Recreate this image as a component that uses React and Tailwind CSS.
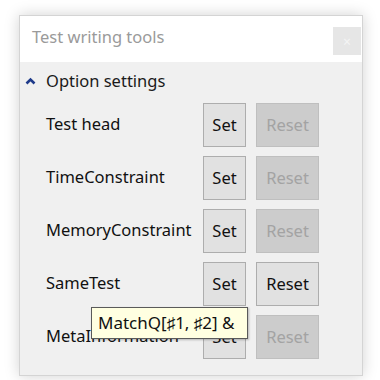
import React from "react";

const rows = [
  { label: "Test head", reset: false },
  { label: "TimeConstraint", reset: false },
  { label: "MemoryConstraint", reset: false },
  { label: "SameTest", reset: true },
  { label: "MetaInformation", reset: false },
];

export default function App() {
  return (
    <div className="w-[380px] h-[380px] bg-white overflow-hidden pt-[15px] pl-[19px]" style={{ fontFamily: '"Noto Sans", "Open Sans", sans-serif' }}>
      <div className="relative w-[344px] h-[361px] flex flex-col bg-[#f0f0f0] border border-[#d4d4d4] shadow-[0_0_14px_rgba(0,0,0,0.18)]">
        <div className="h-[46px] bg-white flex items-start justify-between">
          <div className="pl-[12px] pt-[10px] text-[16.5px] leading-[22px] text-[#9a9a9a]">Test writing tools</div>
          <div className="mt-[11px] mr-[1px] w-[28px] h-[28px] bg-[#e6e6e6] flex items-center justify-center text-[14px] text-[#f4f4f4]">×</div>
        </div>
        <div className="flex items-center pl-[5px] pt-[5px] h-[33px]">
          <svg width="11" height="8" viewBox="0 0 11 8" className="mr-[10px]">
            <polyline points="1.5,6.5 5.5,2.5 9.5,6.5" fill="none" stroke="#1e3a8a" strokeWidth="2.6" />
          </svg>
          <span className="text-[16.5px] leading-[22px] text-[#1a1a1a]">Option settings</span>
        </div>
        <div className="flex flex-col gap-[9px] pt-[8px]">
          {rows.map((r) => (
            <div key={r.label} className="flex items-center">
              <div className="w-[183px] pl-[26px] text-[16.5px] leading-[22px] text-[#111] -mt-[2px] whitespace-nowrap">{r.label}</div>
              <div className="w-[43px] h-[44px] bg-[#e1e1e1] border border-[#adadad] flex items-center justify-center text-[16.5px] text-[#111]">Set</div>
              <div className={"ml-[10px] w-[63px] h-[44px] border flex items-center justify-center text-[16.5px] " + (r.reset ? "bg-[#e1e1e1] border-[#adadad] text-[#111]" : "bg-[#cccccc] border-[#bfbfbf] text-[#a3a3a3]")}>Reset</div>
            </div>
          ))}
        </div>
        <div className="absolute left-[71px] top-[291px] w-[157px] h-[32px] pl-[6px] bg-[#ffffe1] border-[1.5px] border-[#5a5a5a] shadow-[1px_1px_2px_rgba(0,0,0,0.25)] flex items-center text-[17px] leading-[22px] text-[#111] whitespace-nowrap">
          MatchQ[♯1, ♯2] &amp;
        </div>
      </div>
    </div>
  );
}
